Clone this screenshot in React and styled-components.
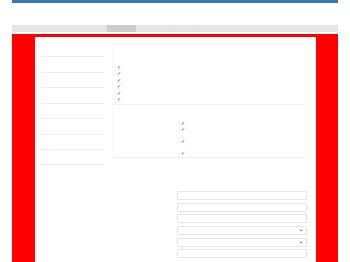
import React from 'react';
import styled, { createGlobalStyle } from 'styled-components';

const Global = createGlobalStyle`
    html, body {
        margin: 0;
        padding: 0;
        background: #ffffff;
        font-family: 'Liberation Sans', Arial, sans-serif;
    }
`

const Page = styled.div`
    padding: 0 12px;
    height: 262px;
    overflow: hidden;
`

const TopBar = styled.div`
    height: 3px;
    background: #337ab7;
`

const Tabs = styled.div`
    display: flex;
    margin-top: 22px;
    height: 7px;
    background: #e6e6e6;
`

const Tab = styled.div`
    width: ${p => p.$w}px;
    background: ${p => (p.$active ? '#cdcdcd' : 'transparent')};
    border-right: 1px solid ${p => (p.$active ? 'transparent' : '#e1e1e1')};
`

const Frame = styled.div`
    margin-top: 2px;
    background: #ff0000;
    padding: 3px 22px 0 23px;
`

const Panel = styled.div`
    background: #ffffff;
    display: flex;
    height: 230px;
`

const Sidebar = styled.ul`
    list-style: none;
    margin: 0 0 0 5px;
    padding: 5px 0 0;
    width: 64px;
`

const SideItem = styled.li`
    height: 14.43px;
    border-bottom: 1px solid #eeeeee;
`

const Content = styled.div`
    flex: 1;
    display: flex;
    flex-direction: column;
    margin-left: 8px;
    margin-right: 9px;
`

const Card = styled.div`
    border: 1px solid #fafafa;
    border-top: ${p => (p.$first ? '1px solid #f6f6f6' : '0')};
    border-bottom: 1px solid #f2f2f2;
    margin-top: ${p => (p.$first ? '6px' : '0')};
    height: ${p => p.$h}px;
    padding: ${p => p.$pt}px 0 0 ${p => p.$pl}px;
    box-sizing: border-box;
    margin-right: 2px;
`

const Check = styled.div`
    font-size: 5px;
    line-height: 6.4px;
    height: 6.4px;
    color: #555;
    margin-top: ${p => p.$gap || 0}px;
`

const Form = styled.form`
    margin: 33px 0 0 65px;
    width: 130px;
    display: flex;
    flex-direction: column;
    gap: 2.7px;
`

const Input = styled.input`
    box-sizing: border-box;
    height: 9px;
    width: 100%;
    margin: 0;
    padding: 0;
    border: 1px solid #e6e6e6;
    border-radius: 1px;
    background: #fff;
`

const Select = styled.div`
    box-sizing: border-box;
    height: 9px;
    border: 1px solid #e6e6e6;
    border-radius: 1px;
    display: flex;
    align-items: center;
    justify-content: flex-end;
    padding-right: 3px;
`

const Chevron = () => (
    <svg width="4" height="3" viewBox="0 0 4 3">
        <path d="M0.5 0.6 L2 2.2 L3.5 0.6" fill="none" stroke="#666" strokeWidth="0.8" />
    </svg>
)

const tabs = [96, 29, 33, 24, 22, 24, 98]

const App = () => {
    return (
        <Page>
            <Global />
            <TopBar />
            <Tabs>
                {tabs.map((w, i) => (
                    <Tab key={i} $w={w} $active={i === 1} />
                ))}
            </Tabs>
            <Frame>
                <Panel>
                    <Sidebar>
                        {Array.from({ length: 8 }).map((_, i) => (
                            <SideItem key={i} />
                        ))}
                    </Sidebar>
                    <Content>
                        <Card $first $h={62} $pt={20} $pl={4}>
                            {Array.from({ length: 6 }).map((_, i) => (
                                <Check key={i}>✓</Check>
                            ))}
                        </Card>
                        <Card $h={53} $pt={15} $pl={68}>
                            <Check>✓</Check>
                            <Check>✓</Check>
                            <Check $gap={5.5}>✓</Check>
                            <Check $gap={5}>✓</Check>
                        </Card>
                        <Form>
                            <Input />
                            <Input />
                            <Input />
                            <Select><Chevron /></Select>
                            <Select><Chevron /></Select>
                            <Input />
                        </Form>
                    </Content>
                </Panel>
            </Frame>
        </Page>
    )
}

export default App
